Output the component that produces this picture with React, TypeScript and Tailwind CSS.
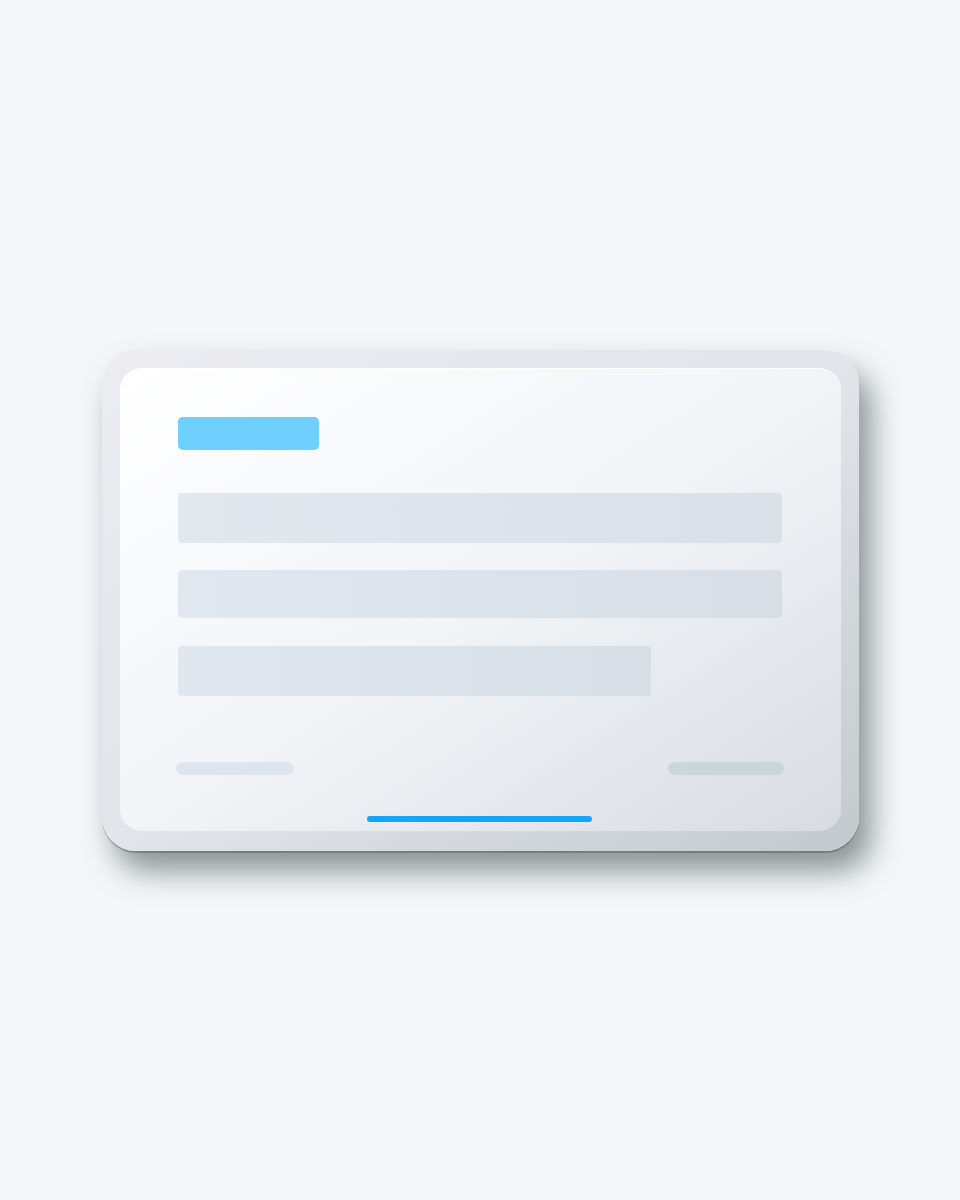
export default function App() {
  return (
    <div className="flex h-[1200px] w-full items-center justify-center bg-[#f3f7fa]">
      <div className="h-[501px] w-[757px] rounded-[34px] bg-gradient-to-br from-[#ececf1] via-[#e2e5ea] to-[#c3c9cc] p-[18px] pb-[20px] shadow-[12px_20px_30px_rgba(55,65,62,0.55),0_2px_0_#b3babd]">
        <div className="flex h-full flex-col rounded-[22px] bg-gradient-to-br from-white via-[#f2f4f8] to-[#d8dce0] pl-[58px] pr-[59px] pt-[49px] shadow-[inset_0_1px_0_rgba(255,255,255,0.9)]">
          <div className="h-[33px] w-[141px] rounded-[5px] bg-[#6fd0fe]" />
          <div className="mt-[43px] h-[50px] w-full rounded-[4px] bg-gradient-to-r from-[#e3e8ef] to-[#d9e0e7]" />
          <div className="mt-[27px] h-[48px] w-full rounded-[4px] bg-gradient-to-r from-[#e2e8ef] to-[#d7dee5]" />
          <div className="mt-[28px] h-[50px] w-[473px] rounded-[4px] bg-gradient-to-r from-[#e1e7ee] to-[#d7dee5]" />
          <div className="-mx-[2px] mt-[66px] flex justify-between">
            <div className="h-[13px] w-[118px] rounded-full bg-[#dfe5ec]" />
            <div className="h-[13px] w-[116px] rounded-full bg-[#cdd5dc]" />
          </div>
          <div className="mx-auto mt-[41px] h-[6px] w-[225px] rounded-full bg-[#14a5f4]" />
        </div>
      </div>
    </div>
  );
}
